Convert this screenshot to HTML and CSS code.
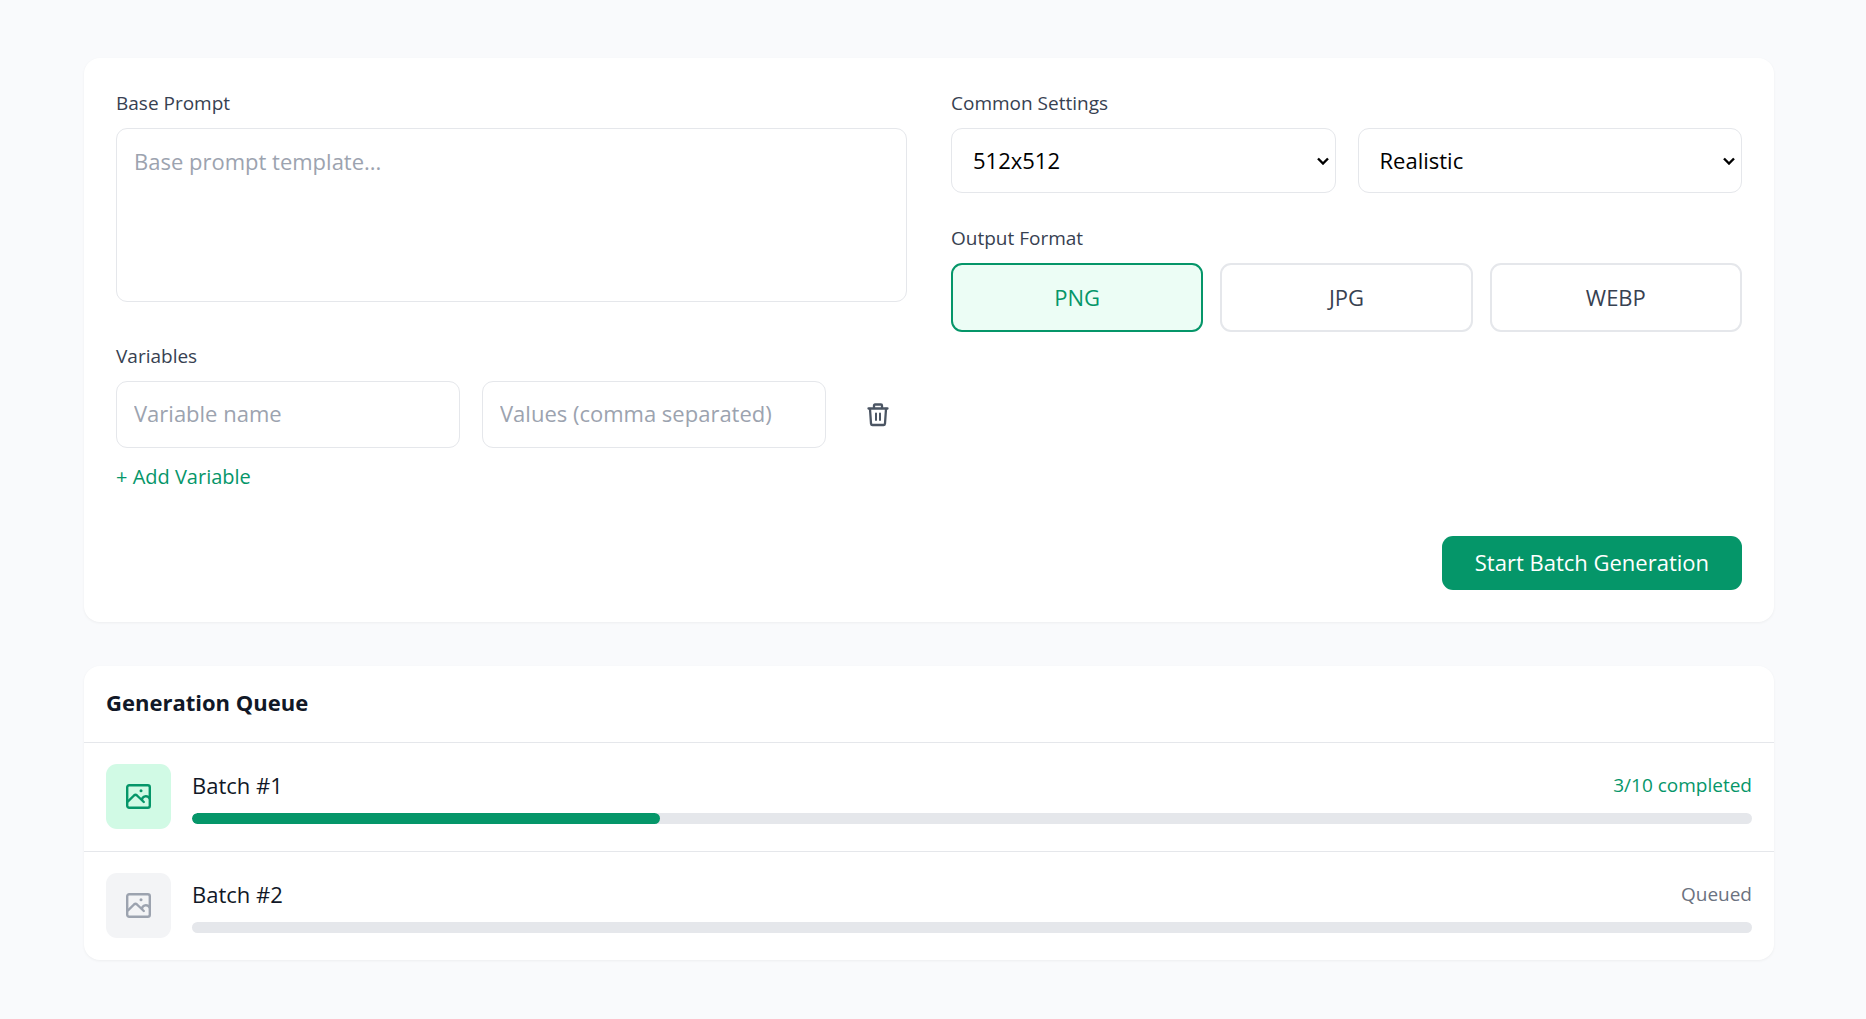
FILE: index.html
```html
<!DOCTYPE html>
<html lang="en">
<head>
<meta charset="utf-8">
<meta name="viewport" content="width=device-width, initial-scale=1">
<title>Batch Generation</title>
<link rel="stylesheet" href="styles.css">
</head>
<body>
<svg class="sprite" aria-hidden="true">
  <symbol id="icon-image" viewBox="0 0 25 25">
    <g fill="none" stroke="currentColor" stroke-width="2.4" stroke-linecap="round" stroke-linejoin="round">
      <rect x="1.200" y="1.200" width="22.600" height="22.600" rx="2"/>
      <path d="M2 17.300 L8 11.500 Q9.500 10.200 11 11.500 L17.800 18"/>
      <path d="M16 15.500 C16.500 12 21 11 23.500 14.200"/>
    </g>
    <circle cx="15" cy="6.800" r="1.500" fill="currentColor"/>
  </symbol>
</svg>
<main class="page">
  <form class="card settings">
    <div class="columns">
      <div class="column">
        <div class="field prompt-field">
          <label class="label" for="prompt">Base Prompt</label>
          <textarea class="control prompt" id="prompt" placeholder="Base prompt template..."></textarea>
        </div>
        <div class="field">
          <label class="label" for="var-name">Variables</label>
          <div class="variable-row">
            <input class="control text-input" id="var-name" type="text" placeholder="Variable name">
            <input class="control text-input" type="text" placeholder="Values (comma separated)" aria-label="Values">
            <button class="delete" type="button" aria-label="Delete variable">
              <svg width="22" height="24" viewBox="0 1 22 24" fill="none" stroke="currentColor" stroke-width="2.3" stroke-linejoin="round" stroke-linecap="round">
                <path d="M1.500 6.500 H20.500"/>
                <path d="M7 6 V3.500 Q7 2.500 8 2.500 H14 Q15 2.500 15 3.500 V6"/>
                <path d="M3 7 L4 21.500 Q4.200 23 5.500 23 H16.500 Q17.800 23 18 21.500 L19 7"/>
                <path d="M9 11.500 V18 M13 11.500 V18" stroke-width="2"/>
              </svg>
            </button>
          </div>
          <button class="add" type="button">+ Add Variable</button>
        </div>
      </div>
      <div class="column">
        <div class="field">
          <label class="label" for="size">Common Settings</label>
          <div class="select-row">
            <select class="control select" id="size"><option>512x512</option></select>
            <select class="control select" aria-label="Style"><option>Realistic</option></select>
          </div>
        </div>
        <div class="field" role="group" aria-labelledby="format-label">
          <span class="label" id="format-label">Output Format</span>
          <div class="format-row">
            <button class="format active" type="button">PNG</button>
            <button class="format" type="button">JPG</button>
            <button class="format" type="button">WEBP</button>
          </div>
        </div>
      </div>
    </div>
    <div class="actions">
      <button class="start" type="button">Start Batch Generation</button>
    </div>
  </form>

  <section class="card queue">
    <h2 class="queue-title">Generation Queue</h2>
    <div class="batch">
      <div class="tile tile-active"><svg width="25" height="25"><use href="#icon-image"/></svg></div>
      <div class="batch-body">
        <div class="batch-head"><span>Batch #1</span><span class="status done">3/10 completed</span></div>
        <div class="track"><div class="bar" style="width:30%"></div></div>
      </div>
    </div>
    <div class="batch">
      <div class="tile"><svg width="25" height="25"><use href="#icon-image"/></svg></div>
      <div class="batch-body">
        <div class="batch-head"><span>Batch #2</span><span class="status">Queued</span></div>
        <div class="track"></div>
      </div>
    </div>
  </section>
</main>
</body>
</html>
```

FILE: styles.css
```css
*, *::before, *::after { box-sizing: border-box; }

body {
  margin: 0;
  background: #f9fafc;
  color: #111827;
  font-family: "Segoe UI", "Open Sans", "Noto Sans", sans-serif;
  font-size: 22px;
  line-height: 30px;
}

button, input, select, textarea { font: inherit; color: inherit; }
button { cursor: pointer; }

.sprite { display: none; }

.page {
  display: flex;
  flex-direction: column;
  gap: 44px;
  padding: 58px 92px 58px 84px;
}

.card {
  background: #fff;
  border-radius: 16px;
  box-shadow: 0 1px 3px rgba(0, 0, 0, 0.05);
}

.settings { padding: 32px; }

.columns {
  display: grid;
  grid-template-columns: 1fr 1fr;
  gap: 44px;
}

.column {
  display: flex;
  flex-direction: column;
  gap: 32px;
}

.field { display: flex; flex-direction: column; }
.prompt-field { padding-bottom: 9px; }

.label {
  margin-bottom: 11px;
  color: #374151;
  font-size: 19px;
  line-height: 27px;
}

.control {
  width: 100%;
  min-width: 0;
  border: 1px solid #e5e7eb;
  border-radius: 11px;
  background: #fff;
}

.control::placeholder { color: #9ca3af; opacity: 1; }

.prompt {
  display: block;
  height: 174px;
  padding: 17px;
  resize: none;
}

.text-input { height: 67px; padding: 0 17px 3px; }

.variable-row {
  display: grid;
  grid-template-columns: 1fr 1fr 59px;
  gap: 22px;
}

.delete {
  display: flex;
  align-items: center;
  justify-content: center;
  padding: 0;
  border: 0;
  background: none;
  color: #4b5563;
}

.add {
  align-self: flex-start;
  margin-top: 15px;
  padding: 0;
  border: 0;
  background: none;
  color: #059669;
  font-size: 20px;
  line-height: 27px;
}

.select-row {
  display: grid;
  grid-template-columns: 1fr 1fr;
  gap: 22px;
}

.select {
  height: 65px;
  padding: 0 28px 2px 21px;
  appearance: none;
  background: #fff url("data:image/svg+xml,%3Csvg xmlns='http://www.w3.org/2000/svg' width='12' height='8' fill='none' stroke='black' stroke-width='2.400'%3E%3Cpath d='M1 1.500 6 6.500 11 1.500'/%3E%3C/svg%3E") no-repeat right 6px center;
  color: #000;
}

.format-row {
  display: grid;
  grid-template-columns: 1fr 1fr 1fr;
  gap: 17px;
}

.format {
  height: 69px;
  padding: 0 0 2px;
  border: 2px solid #e5e7eb;
  border-radius: 11px;
  background: #fff;
  color: #374151;
}

.format.active {
  border-color: #059669;
  background: #ecfdf5;
  color: #059669;
}

.actions {
  display: flex;
  justify-content: flex-end;
  margin-top: 46px;
}

.start {
  padding: 11px 33px 13px;
  border: 0;
  border-radius: 11px;
  background: #059669;
  color: #fff;
}

.queue-title {
  margin: 0;
  padding: 21px 22px 25px;
  font-size: 22px;
  font-weight: 700;
}

.batch {
  display: flex;
  align-items: center;
  gap: 21px;
  padding: 21px 22px 22px;
  border-top: 1px solid #e5e7eb;
}

.tile {
  display: flex;
  align-items: center;
  justify-content: center;
  width: 65px;
  height: 65px;
  border-radius: 11px;
  background: #f3f4f6;
  color: #9ca3af;
}

.tile-active { background: #d1fae5; color: #059669; }

.batch-body { flex: 1; }

.batch-head {
  display: flex;
  justify-content: space-between;
  margin-bottom: 13px;
}

.status { color: #6b7280; font-size: 19px; }
.status.done { color: #059669; }

.track {
  height: 11px;
  border-radius: 6px;
  background: #e5e7eb;
  overflow: hidden;
}

.bar { height: 100%; border-radius: 6px; background: #059669; }
```
